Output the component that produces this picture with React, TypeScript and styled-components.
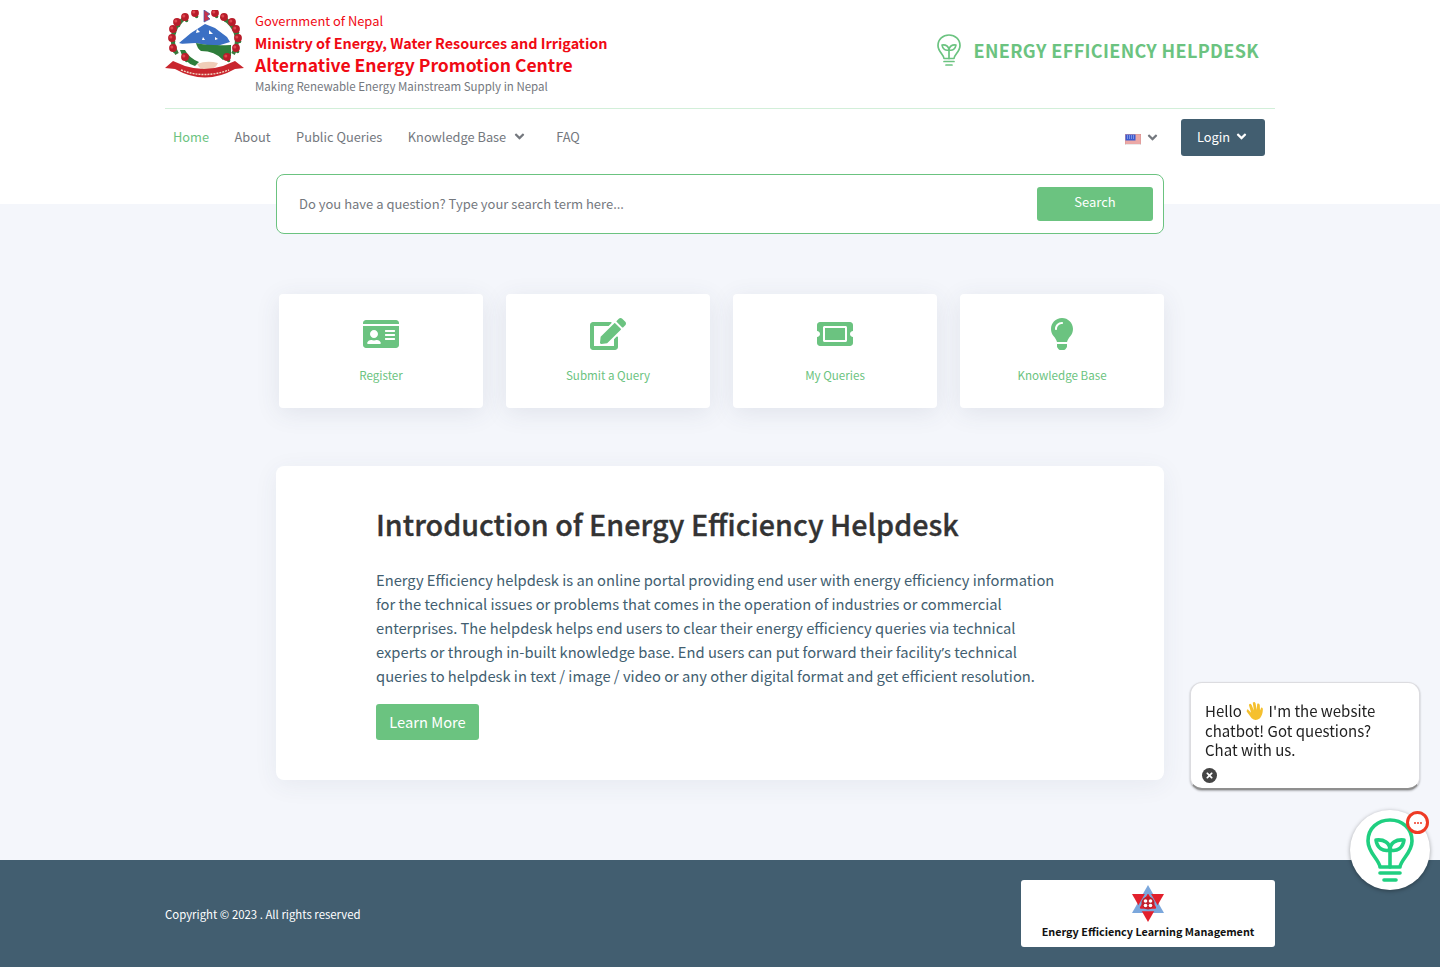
import React from 'react';
import styled, { createGlobalStyle } from 'styled-components';
import { FaAngleDown, FaEdit, FaIdCard, FaLightbulb, FaTicketAlt, FaTimes } from 'react-icons/fa';

const GREEN = '#6bc380';
const SLATE = '#425e70';

const GlobalStyle = createGlobalStyle`
  html, body { margin: 0; padding: 0; }
  body {
    background: #f4f6fb;
    font-family: "Noto Sans CJK SC", "Open Sans", sans-serif;
    color: ${SLATE};
  }
  * { box-sizing: border-box; }
`;

const Page = styled.div`
  width: 100%;
  min-height: 967px;
  display: flex;
  flex-direction: column;
`;

const HeaderBand = styled.header`
  background: #fff;
  height: 204px;
`;

const Container = styled.div`
  width: 1110px;
  margin: 0 auto;
`;

const TopRow = styled.div`
  height: 109px;
  display: flex;
  justify-content: space-between;
  border-bottom: 1px solid #d2efd9;
`;

const Brand = styled.div`
  display: flex;
  align-items: flex-start;
  gap: 10px;
  padding-top: 10px;
`;

const BrandText = styled.div`
  display: flex;
  flex-direction: column;
`;

const BrandLine = styled.div<{ $size: number; $weight: number; $muted?: boolean }>`
  font-size: ${(p) => p.$size}px;
  font-weight: ${(p) => p.$weight};
  line-height: 22px;
  margin-top: ${(p) => (p.$muted ? -1 : 0)}px;
  color: ${(p) => (p.$muted ? '#74787e' : '#f00a14')};
  white-space: nowrap;
`;

const Helpdesk = styled.div`
  display: flex;
  align-items: center;
  gap: 13px;
  height: 100px;
  padding: 0 16px 0 0;
`;

const HelpdeskTitle = styled.div`
  font-size: 18px;
  font-weight: 600;
  line-height: 26px;
  letter-spacing: 0.35px;
  color: ${GREEN};
`;

const NavRow = styled.nav`
  display: flex;
  align-items: center;
  height: 57px;
  padding: 0 10px 0 8px;
  font-size: 12.8px;
`;

const NavLink = styled.a<{ $active?: boolean; $after?: number }>`
  display: flex;
  align-items: center;
  gap: 6px;
  margin-right: ${(p) => p.$after ?? 25.5}px;
  padding-bottom: 2px;
  color: ${(p) => (p.$active ? GREEN : '#74787e')};
  white-space: nowrap;
`;

const NavSpacer = styled.div`
  flex: 1;
`;

const LangPicker = styled.div`
  display: flex;
  align-items: center;
  gap: 4px;
  margin-right: 21px;
  color: #74787e;
`;

const FlagSlot = styled.div`
  display: flex;
  padding: 3px 0 0 1px;
`;

const LoginButton = styled.button`
  display: flex;
  align-items: center;
  justify-content: center;
  gap: 4px;
  width: 84px;
  height: 37px;
  padding: 0 0 3px;
  border: 0;
  border-radius: 3px;
  background: ${SLATE};
  color: #fff;
  font: inherit;
`;

const Main = styled.main`
  width: 888px;
  margin: -30px auto 0;
  flex: 1;
`;

const SearchBox = styled.form`
  display: flex;
  align-items: center;
  height: 60px;
  padding: 0 10px 0 22px;
  background: #fff;
  border: 1px solid ${GREEN};
  border-radius: 8px;
`;

const SearchInput = styled.input`
  flex: 1;
  border: 0;
  outline: 0;
  padding: 0 0 2px;
  font: inherit;
  font-size: 13px;
  color: #74787e;
  &::placeholder { color: #74787e; opacity: 1; }
`;

const SearchButton = styled.button`
  width: 116px;
  height: 34px;
  padding: 0 0 5px;
  border: 0;
  border-radius: 3px;
  background: ${GREEN};
  color: #fff;
  font: inherit;
  font-size: 13px;
`;

const CardGrid = styled.div`
  display: grid;
  grid-template-columns: repeat(4, 204px);
  gap: 23px;
  margin-top: 60px;
  padding-left: 3px;
`;

const ActionCard = styled.a`
  height: 114px;
  display: flex;
  flex-direction: column;
  align-items: center;
  padding-top: 22px;
  background: #fff;
  border-radius: 4px;
  box-shadow: 0 5px 25px rgba(60, 70, 100, 0.1);
  color: ${GREEN};
  font-size: 11.6px;
`;

const CardIcon = styled.div<{ $size: number }>`
  height: 36px;
  display: flex;
  align-items: center;
  justify-content: center;
  font-size: ${(p) => p.$size}px;
`;

const CardLabel = styled.div`
  margin-top: 14px;
  line-height: 18px;
`;

const IntroCard = styled.section`
  margin-top: 58px;
  height: 314px;
  padding: 38px 100px 0;
  background: #fff;
  border-radius: 8px;
  box-shadow: 0 5px 25px rgba(60, 70, 100, 0.07);
`;

const IntroTitle = styled.h1`
  margin: 0;
  font-size: 28.7px;
  font-weight: 500;
  line-height: 40px;
  -webkit-text-stroke: 0.35px #333;
  color: #333;
`;

const IntroText = styled.p`
  margin: 24px 0 0;
  font-size: 14.72px;
  line-height: 24px;
  color: ${SLATE};
`;

// the CJK face sets a curly apostrophe full width
const Apostrophe = styled.span`
  font-family: "Noto Sans", sans-serif;
`;

const LearnMore = styled.a`
  display: inline-flex;
  align-items: center;
  justify-content: center;
  width: 103px;
  height: 36px;
  margin-top: 16px;
  padding-bottom: 1px;
  border-radius: 3px;
  background: ${GREEN};
  color: #fff;
  font-size: 14.7px;
`;

const Footer = styled.footer`
  margin-top: 80px;
  height: 107px;
  background: ${SLATE};
`;

const FooterInner = styled(Container)`
  height: 100%;
  display: flex;
  align-items: center;
  justify-content: space-between;
`;

const Copyright = styled.div`
  font-size: 11.4px;
  color: #fff;
`;

const LearningCard = styled.a`
  width: 254px;
  height: 67px;
  display: flex;
  flex-direction: column;
  align-items: center;
  padding-top: 5px;
  background: #fff;
  border-radius: 3px;
  color: #111;
  font-size: 10.8px;
  font-weight: 600;
  line-height: 16px;
`;

const LearningName = styled.div`
  margin-top: 1px;
`;

const ChatBubble = styled.div`
  position: fixed;
  right: 20px;
  bottom: 177px;
  width: 230px;
  height: 108px;
  padding: 17.6px 14px 0;
  background: #fff;
  border: 1px solid #dcdce0;
  border-bottom: 2px solid #8f8f8f;
  border-radius: 12px;
  box-shadow: 0 1px 2px rgba(0, 0, 0, 0.3);
  font-size: 15px;
  line-height: 19.5px;
  color: #222;
`;

const CloseDot = styled.div`
  position: absolute;
  left: 11px;
  bottom: 5px;
  width: 15px;
  height: 15px;
  display: flex;
  align-items: center;
  justify-content: center;
  border-radius: 50%;
  background: #444;
  color: #fff;
  font-size: 9px;
`;

const WaveHand = styled.svg`
  width: 20px;
  height: 20px;
  vertical-align: -4px;
`;

const Launcher = styled.div`
  position: fixed;
  right: 10px;
  bottom: 77px;
  width: 80px;
  height: 80px;
  display: flex;
  align-items: center;
  justify-content: center;
  background: #fff;
  border-radius: 50%;
  box-shadow: 0 1px 4px rgba(0, 0, 0, 0.35);
`;

const Badge = styled.div`
  position: absolute;
  top: 1px;
  right: 1px;
  width: 23px;
  height: 23px;
  display: flex;
  align-items: center;
  justify-content: center;
  gap: 1px;
  border: 3.5px solid #ee3a24;
  border-radius: 50%;
  background: #fff;
`;

const BadgeDot = styled.span`
  width: 2px;
  height: 2px;
  border-radius: 50%;
  background: #ee3a24;
`;

// rhododendrons of the state emblem, left side then right side
const flowers = [
  [20, 47], [8, 38], [7, 28], [8, 19], [12, 12], [20, 7], [30, 3],
  [50, 3], [59, 7], [67, 12], [71, 19], [73, 28], [71, 38], [62, 47],
];

const Emblem = () => (
  <svg width="80" height="68" viewBox="0 0 80 68">
    <defs>
      <filter id="soft"><feGaussianBlur stdDeviation="0.35" /></filter>
    </defs>
    <g filter="url(#soft)">
      <path d="M12 44 Q0 22 22 6 M68 44 Q80 22 56 6" fill="none" stroke="#3c7a3e" strokeWidth="4" />
      <path d="M39 12 V0 L45 4 L42 6 L45 9 L41 11 Z" fill="#c8324a" stroke="#3a55a8" strokeWidth="0.7" />
      <path d="M14 33 L26 23 L40 14 L50 18 L62 27 L65 32 L52 36 L36 35 L24 36 Z" fill="#3b6fc4" />
      <path d="M32 19 l3 3 l-4 1 Z M44 20 l4 4 l-4 0 Z M50 27 l3 2 l-3 1 Z M38 27 l2 3 l-3 0 Z" fill="#fff" />
      <path d="M14 34 L30 33 L48 36 L64 36 L60 52 L20 52 Z" fill="#fff" />
      <path d="M31 33 Q44 36 66 35 L66 46 L58 50 Q50 41 36 41 Q32 38 31 33 Z" fill="#2f7d3a" />
      <path d="M15 40 Q18 52 30 56 L34 52 Q24 48 20 40 Z" fill="#2f7d3a" />
      <path d="M32 54 Q42 50 53 53 Q50 60 42 60 Q35 60 32 54 Z" fill="#f0cdb8" />
      {flowers.map(([x, y], i) => (
        <g key={i} transform={`translate(${x} ${y})`}>
          <circle cx="1.6" cy="3.6" r="1.7" fill="#2f7d3a" />
          <circle r="3.9" fill="#b81d29" />
          <circle cx="-1.2" cy="-1" r="1.5" fill="#de4650" />
        </g>
      ))}
      <path d="M0 58 L8 51 L20 56 Q39 62 58 56 L70 51 L79 58 L70 59 Q40 76 10 59 Z" fill="#c9262e" />
      <path d="M16 60 Q39 69 64 60" fill="none" stroke="#f3d6c4" strokeWidth="1.4" strokeDasharray="2 1" />
    </g>
  </svg>
);

const BulbOutline = ({ w, h, color, sw }: { w: number; h: number; color: string; sw: number }) => (
  <svg width={w} height={h} viewBox="0 0 48 64" fill="none" stroke={color} strokeWidth={sw} strokeLinecap="round" strokeLinejoin="round">
    <path d="M14 49 C13 41 2 35 2 23 C2 10 12 2 24 2 C36 2 46 10 46 23 C46 35 35 41 34 49 Z" />
    <path d="M24 49 V29" />
    <path d="M24 32 C24 25 18 21 10 22 C11 30 17 34 24 32 Z" />
    <path d="M24 32 C24 25 30 21 38 22 C37 30 31 34 24 32 Z" />
    <path d="M14 55 H34" />
    <path d="M18 62 H30" />
  </svg>
);

const UsFlag = () => (
  <svg width="16" height="11" viewBox="0 0 16 11">
    <rect width="16" height="11" fill="#fff" stroke="#aaa" strokeWidth="0.5" />
    <path d="M0 1H16M0 3H16M0 5H16M0 7H16M0 9H16" stroke="#d9534f" strokeWidth="1" />
    <rect x="0.5" y="0.5" width="10" height="6" fill="#3b5bd0" />
    <path d="M2 2H9M2 4H9" stroke="#dfe6ff" strokeWidth="0.8" strokeDasharray="1 1" />
  </svg>
);

const StarMark = () => (
  <svg width="34" height="37" viewBox="0 0 34 37">
    <path d="M17 0 L33 28 L1 28 Z" fill="#7ba7dc" />
    <path d="M1 9 L33 9 L17 37 Z" fill="#e2202c" />
    <path d="M17 6 L28 25 L6 25 Z" fill="none" stroke="#7ba7dc" strokeWidth="2.4" />
    <circle cx="17" cy="18" r="6.5" fill="#c21f2b" />
    <circle cx="14.5" cy="16" r="1.8" fill="#fff" />
    <circle cx="19.5" cy="16" r="1.8" fill="#fff" />
    <circle cx="14.5" cy="20.5" r="1.8" fill="#fff" />
    <circle cx="19.5" cy="20.5" r="1.8" fill="#fff" />
  </svg>
);

const navChevron = <FaAngleDown size={15} />;

const cards = [
  { label: 'Register', icon: <FaIdCard />, size: 36 },
  { label: 'Submit a Query', icon: <FaEdit />, size: 36 },
  { label: 'My Queries', icon: <FaTicketAlt />, size: 36 },
  { label: 'Knowledge Base', icon: <FaLightbulb />, size: 32 },
];

export default function App() {
  return (
    <Page>
      <GlobalStyle />
      <HeaderBand>
        <Container>
          <TopRow>
            <Brand>
              <Emblem />
              <BrandText>
                <BrandLine $size={12.9} $weight={400}>Government of Nepal</BrandLine>
                <BrandLine $size={14.4} $weight={600}>Ministry of Energy, Water Resources and Irrigation</BrandLine>
                <BrandLine $size={17.5} $weight={600}>Alternative Energy Promotion Centre</BrandLine>
                <BrandLine $size={11.5} $weight={400} $muted>Making Renewable Energy Mainstream Supply in Nepal</BrandLine>
              </BrandText>
            </Brand>
            <Helpdesk>
              <BulbOutline w={24} h={32} color={GREEN} sw={3.4} />
              <HelpdeskTitle>ENERGY EFFICIENCY HELPDESK</HelpdeskTitle>
            </Helpdesk>
          </TopRow>
          <NavRow>
            <NavLink $active>Home</NavLink>
            <NavLink>About</NavLink>
            <NavLink>Public Queries</NavLink>
            <NavLink $after={29}>Knowledge Base {navChevron}</NavLink>
            <NavLink>FAQ</NavLink>
            <NavSpacer />
            <LangPicker><FlagSlot><UsFlag /></FlagSlot> {navChevron}</LangPicker>
            <LoginButton>Login {navChevron}</LoginButton>
          </NavRow>
        </Container>
      </HeaderBand>
      <Main>
        <SearchBox>
          <SearchInput placeholder="Do you have a question? Type your search term here..." />
          <SearchButton type="button">Search</SearchButton>
        </SearchBox>
        <CardGrid>
          {cards.map((c) => (
            <ActionCard key={c.label}>
              <CardIcon $size={c.size}>{c.icon}</CardIcon>
              <CardLabel>{c.label}</CardLabel>
            </ActionCard>
          ))}
        </CardGrid>
        <IntroCard>
          <IntroTitle>Introduction of Energy Efficiency Helpdesk</IntroTitle>
          <IntroText>
            Energy Efficiency helpdesk is an online portal providing end user with energy efficiency information
            for the technical issues or problems that comes in the operation of industries or commercial
            enterprises. The helpdesk helps end users to clear their energy efficiency queries via technical
            experts or through in-built knowledge base. End users can put forward their facility<Apostrophe>’</Apostrophe>s technical
            queries to helpdesk in text / image / video or any other digital format and get efficient resolution.
          </IntroText>
          <LearnMore>Learn More</LearnMore>
        </IntroCard>
      </Main>
      <Footer>
        <FooterInner>
          <Copyright>Copyright © 2023 . All rights reserved</Copyright>
          <LearningCard>
            <StarMark />
            <LearningName>Energy Efficiency Learning Management</LearningName>
          </LearningCard>
        </FooterInner>
      </Footer>
      <ChatBubble>
        Hello{' '}
        <WaveHand viewBox="2.5 1.5 16 18">
          <path d="M4 9 L7 12 L5 5 Q6 3 7.5 5 L9.5 10 L8.5 3 Q10 1.5 11 3.5 L12 9.5 L12.5 4 Q14 3 14.8 5 L15 10 L16 7.5 Q17.5 7 17.6 9 Q17.5 14 15 17 Q11 20 7.5 17 L3 11 Q3 9 4 9 Z" fill="#f5c02e" />
        </WaveHand>{' '}
        I'm the website chatbot! Got questions? Chat with us.
        <CloseDot><FaTimes /></CloseDot>
      </ChatBubble>
      <Launcher>
        <BulbOutline w={48} h={64} color="#1fcf80" sw={3.6} />
        <Badge><BadgeDot /><BadgeDot /><BadgeDot /></Badge>
      </Launcher>
    </Page>
  );
}
